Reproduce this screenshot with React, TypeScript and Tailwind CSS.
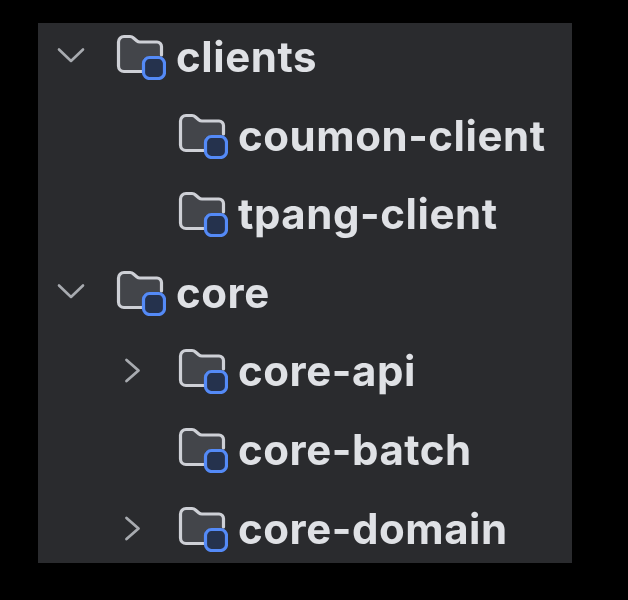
type Row = { name: string; depth: 0 | 1; arrow?: "down" | "right" };

const rows: Row[] = [
  { name: "clients", depth: 0, arrow: "down" },
  { name: "coumon-client", depth: 1 },
  { name: "tpang-client", depth: 1 },
  { name: "core", depth: 0, arrow: "down" },
  { name: "core-api", depth: 1, arrow: "right" },
  { name: "core-batch", depth: 1 },
  { name: "core-domain", depth: 1, arrow: "right" },
];

function Chevron({ arrow }: { arrow?: "down" | "right" }) {
  return (
    <svg width="30" height="30" viewBox="0 0 30 30" fill="none" className="shrink-0 text-[#a8abb0]">
      {arrow === "down" && (
        <path d="M3 7.5 L15 19 L27 7.5" stroke="currentColor" strokeWidth="2.6" strokeLinecap="round" strokeLinejoin="round" />
      )}
      {arrow === "right" && (
        <path d="M8.5 4 L20.5 14.5 L8.5 25" stroke="currentColor" strokeWidth="2.8" strokeLinecap="round" strokeLinejoin="round" />
      )}
    </svg>
  );
}

function ModuleFolder() {
  return (
    <svg width="50" height="46" viewBox="0 0 50 46" fill="none" className="shrink-0">
      <path
        d="M2.5 8 a5.5 5.5 0 0 1 5.5 -5.5 H14 q2 0 3.5 1.5 L21 7 q1.2 1 3 1 H41 a4.5 4.5 0 0 1 4.5 4.5 V24 H27.5 V37.5 H8 a5.5 5.5 0 0 1 -5.5 -5.5 Z"
        fill="#43454a"
      />
      <path
        d="M26 37.5 H8 a5.5 5.5 0 0 1 -5.5 -5.5 V8 a5.5 5.5 0 0 1 5.5 -5.5 H14 q2 0 3.5 1.5 L21 7 q1.2 1 3 1 H41 a4.5 4.5 0 0 1 4.5 4.5 V21"
        stroke="#ced0d6"
        strokeWidth="3.2"
        strokeLinecap="round"
      />
      <rect x="27.5" y="23.5" width="21" height="21" rx="6" fill="#25324d" stroke="#548af7" strokeWidth="3.2" />
    </svg>
  );
}

export default function App() {
  return (
    <div className="w-[628px] h-[600px] bg-black pt-[23px] pl-[38px] overflow-hidden">
      <div className="w-[534px] h-[540px] bg-[#2a2b2e] pt-[12px] flex flex-col gap-[34.6px] overflow-hidden blur-[0.6px]">
        {rows.map((row) => (
          <div key={row.name} className={`flex items-center h-[44px] ${row.depth === 0 ? "pl-[18px]" : "pl-[80px]"}`}>
            <Chevron arrow={row.arrow} />
            <div className="w-[30px] shrink-0" />
            <ModuleFolder />
            <span className="ml-[10px] text-[42px] leading-none font-bold text-[#dfe1e5] font-['Inter',sans-serif] tracking-[0.55px]">
              {row.name}
            </span>
          </div>
        ))}
      </div>
    </div>
  );
}
